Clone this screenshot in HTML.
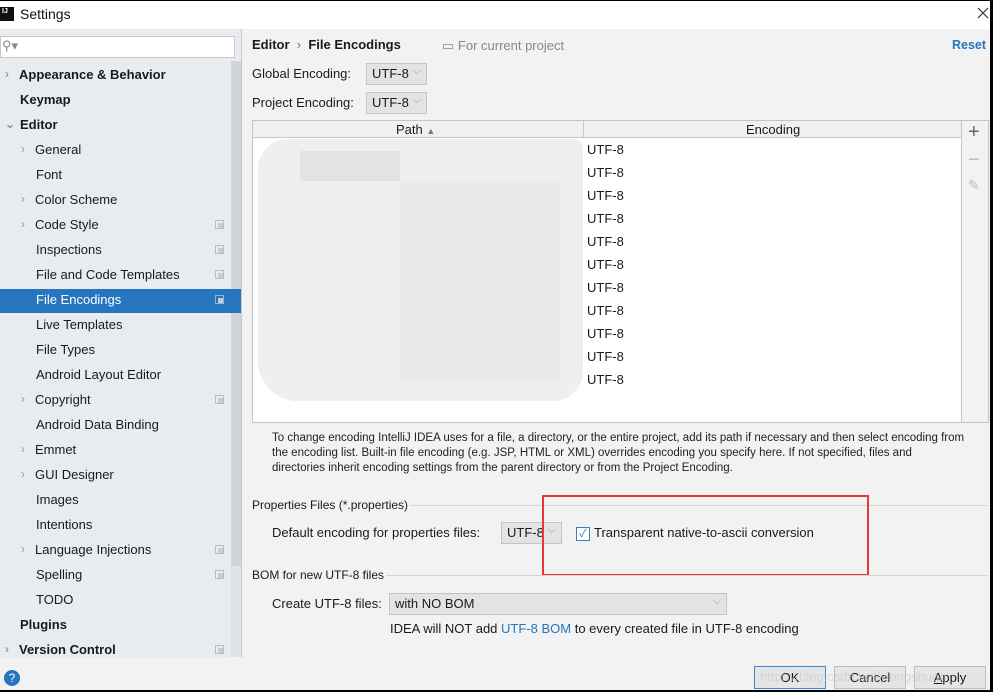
<!DOCTYPE html>
<html><head><meta charset="utf-8"><style>
*{margin:0;padding:0;box-sizing:border-box}
body{width:993px;height:692px;overflow:hidden;background:#000;font-family:"Liberation Sans","Noto Sans CJK SC",sans-serif;font-size:13px;color:#1a1a1a;position:relative}
.a{position:absolute;white-space:nowrap}
#win{position:absolute;left:0;top:1px;width:990px;height:689px;background:#f2f2f2}
.si{position:absolute;left:0;width:241px;height:25px;line-height:25px}
.b{font-weight:bold}
.arr{position:absolute;left:5px;color:#999;font-size:12px}
.cp{position:absolute;left:215px;top:8px;width:9px;height:9px;border:1px solid #b8bcc0}
.cp:after{content:"";position:absolute;left:2px;top:2px;width:5px;height:5px;background:#c8ccd0}
.cb{position:absolute;background:#e3e3e3;border:1px solid #c4c4c4;height:22px;line-height:20px;padding-left:5px}
.cb:after{content:"⌵";position:absolute;right:5px;top:-3px;color:#999;font-size:11px}
.row{position:absolute;left:587px;font-size:13px}
</style></head><body>
<div id="win">
<div class="a" style="left:0;top:0;width:990px;height:28px;background:#fff"></div>
<div class="a" style="left:0;top:6px;width:14px;height:14px;background:#111;color:#fff;font-size:7px;font-weight:bold;line-height:9px;padding-left:2px">IJ</div>
<div class="a" style="left:20px;top:5px;font-size:14px;color:#111">Settings</div>
<svg class="a" style="left:977px;top:6px" width="12" height="12"><path d="M1 1L11 11M11 1L1 11" stroke="#333" stroke-width="1.2"/></svg>
<div class="a" style="left:0;top:28px;width:241px;height:628px;background:#e8ebef"></div>
<div class="a" style="left:231px;top:60px;width:10px;height:596px;background:#dfe2e6"></div>
<div class="a" style="left:231px;top:60px;width:10px;height:505px;background:#d0d3d7"></div>
<div class="a" style="left:0;top:35px;width:235px;height:22px;background:#fff;border:1px solid #c8c8c8"></div>
<div class="a" style="left:2px;top:37px;color:#888;font-size:13px">⚲▾</div>
<div class="a" style="left:0;top:288px;width:241px;height:24px;background:#2675bf"></div>
<div id="side" class="a" style="left:0;top:61px;width:241px">
<div class="si b" style="top:0"><span class="arr">›</span><span style="margin-left:19px">Appearance &amp; Behavior</span></div>
<div class="si b" style="top:25px"><span style="margin-left:20px">Keymap</span></div>
<div class="si b" style="top:50px"><span class="arr">⌄</span><span style="margin-left:20px">Editor</span></div>
<div class="si" style="top:75px"><span class="arr" style="left:21px">›</span><span style="margin-left:35px">General</span></div>
<div class="si" style="top:100px"><span style="margin-left:36px">Font</span></div>
<div class="si" style="top:125px"><span class="arr" style="left:21px">›</span><span style="margin-left:35px">Color Scheme</span></div>
<div class="si" style="top:150px"><span class="arr" style="left:21px">›</span><span style="margin-left:35px">Code Style</span><i class="cp"></i></div>
<div class="si" style="top:175px"><span style="margin-left:36px">Inspections</span><i class="cp"></i></div>
<div class="si" style="top:200px"><span style="margin-left:36px">File and Code Templates</span><i class="cp"></i></div>
<div class="si" style="top:225px;color:#fff"><span style="margin-left:36px">File Encodings</span><i class="cp" style="border-color:#8fb5dd"></i></div>
<div class="si" style="top:250px"><span style="margin-left:36px">Live Templates</span></div>
<div class="si" style="top:275px"><span style="margin-left:36px">File Types</span></div>
<div class="si" style="top:300px"><span style="margin-left:36px">Android Layout Editor</span></div>
<div class="si" style="top:325px"><span class="arr" style="left:21px">›</span><span style="margin-left:35px">Copyright</span><i class="cp"></i></div>
<div class="si" style="top:350px"><span style="margin-left:36px">Android Data Binding</span></div>
<div class="si" style="top:375px"><span class="arr" style="left:21px">›</span><span style="margin-left:35px">Emmet</span></div>
<div class="si" style="top:400px"><span class="arr" style="left:21px">›</span><span style="margin-left:35px">GUI Designer</span></div>
<div class="si" style="top:425px"><span style="margin-left:36px">Images</span></div>
<div class="si" style="top:450px"><span style="margin-left:36px">Intentions</span></div>
<div class="si" style="top:475px"><span class="arr" style="left:21px">›</span><span style="margin-left:35px">Language Injections</span><i class="cp"></i></div>
<div class="si" style="top:500px"><span style="margin-left:36px">Spelling</span><i class="cp"></i></div>
<div class="si" style="top:525px"><span style="margin-left:36px">TODO</span></div>
<div class="si b" style="top:550px"><span style="margin-left:20px">Plugins</span></div>
<div class="si b" style="top:575px"><span class="arr">›</span><span style="margin-left:19px">Version Control</span><i class="cp"></i></div>
</div>
<div class="a" style="left:241px;top:28px;width:1px;height:628px;background:#c9c9c9"></div>
<div class="a" style="left:4px;top:669px;width:16px;height:16px;border-radius:50%;background:#2675bf;color:#fff;font-size:12px;text-align:center;line-height:16px">?</div>
<div class="a b" style="left:252px;top:36px;font-size:13px">Editor &nbsp;<span style="font-weight:normal;color:#777">›</span>&nbsp; File Encodings</div>
<div class="a" style="left:442px;top:37px;color:#888">▭ For current project</div>
<div class="a b" style="left:952px;top:37px;color:#2675bf;font-size:12.5px">Reset</div>
<div class="a" style="left:252px;top:65px">Global Encoding:</div>
<div class="cb a" style="left:366px;top:62px;width:61px">UTF-8</div>
<div class="a" style="left:252px;top:94px">Project Encoding:</div>
<div class="cb a" style="left:366px;top:91px;width:61px">UTF-8</div>
<div class="a" style="left:252px;top:119px;width:710px;height:303px;background:#fff;border:1px solid #c4c4c4"></div>
<div class="a" style="left:253px;top:120px;width:708px;height:17px;background:#f0f0f0;border-bottom:1px solid #c8c8c8"></div>
<div class="a" style="left:583px;top:120px;width:1px;height:17px;background:#c8c8c8"></div>
<div class="a" style="left:396px;top:121px;font-size:13px">Path <span style="font-size:9px;color:#777">▲</span></div>
<div class="a" style="left:746px;top:121px">Encoding</div>
<div class="a" style="left:258px;top:138px;width:325px;height:262px;background:#eeeff0;border-radius:30px 10px 30px 40px"></div>
<div class="a" style="left:300px;top:150px;width:100px;height:30px;background:#e3e3e3"></div>
<div class="a" style="left:400px;top:180px;width:160px;height:200px;background:#e9e9e9"></div>
<div class="row" style="top:141px">UTF-8</div>
<div class="row" style="top:164px">UTF-8</div>
<div class="row" style="top:187px">UTF-8</div>
<div class="row" style="top:210px">UTF-8</div>
<div class="row" style="top:233px">UTF-8</div>
<div class="row" style="top:256px">UTF-8</div>
<div class="row" style="top:279px">UTF-8</div>
<div class="row" style="top:302px">UTF-8</div>
<div class="row" style="top:325px">UTF-8</div>
<div class="row" style="top:348px">UTF-8</div>
<div class="row" style="top:371px">UTF-8</div>
<div class="a" style="left:962px;top:119px;width:27px;height:303px;border:1px solid #c4c4c4;border-left:none"></div>
<div class="a" style="left:968px;top:120px;font-size:20px;color:#666">+</div>
<div class="a" style="left:968px;top:148px;font-size:20px;color:#bbb">−</div>
<div class="a" style="left:968px;top:176px;font-size:14px;color:#bbb">✎</div>
<div class="a" style="left:272px;top:430px;font-size:11.5px;line-height:15px;color:#222">To change encoding IntelliJ IDEA uses for a file, a directory, or the entire project, add its path if necessary and then select encoding from<br>the encoding list. Built-in file encoding (e.g. JSP, HTML or XML) overrides encoding you specify here. If not specified, files and<br>directories inherit encoding settings from the parent directory or from the Project Encoding.</div>
<div class="a" style="left:252px;top:497px;font-size:12px">Properties Files (*.properties)</div>
<div class="a" style="left:410px;top:504px;width:578px;height:1px;background:#d5d5d5"></div>
<div class="a" style="left:272px;top:524px">Default encoding for properties files:</div>
<div class="cb a" style="left:501px;top:521px;width:61px">UTF-8</div>
<div class="a" style="left:576px;top:526px;width:14px;height:14px;background:#fff;border:1px solid #3a7cc4;color:#3a7cc4;font-size:11px;line-height:12px;text-align:center">✓</div>
<div class="a" style="left:594px;top:524px">Transparent native-to-ascii conversion</div>
<div class="a" style="left:542px;top:494px;width:327px;height:81px;border:2px solid #e53935"></div>
<div class="a" style="left:252px;top:567px;font-size:12px">BOM for new UTF-8 files</div>
<div class="a" style="left:386px;top:574px;width:602px;height:1px;background:#d5d5d5"></div>
<div class="a" style="left:272px;top:595px">Create UTF-8 files:</div>
<div class="cb a" style="left:389px;top:592px;width:338px">with NO BOM</div>
<div class="a" style="left:390px;top:620px">IDEA will NOT add <span style="color:#2675bf">UTF-8 BOM</span> to every created file in UTF-8 encoding</div>
<div class="a" style="left:754px;top:665px;width:72px;height:23px;background:#e5e5e5;border:1px solid #3a8ad6;text-align:center;line-height:21px">OK</div>
<div class="a" style="left:834px;top:665px;width:72px;height:23px;background:#e5e5e5;border:1px solid #bdbdbd;text-align:center;line-height:21px">Cancel</div>
<div class="a" style="left:914px;top:665px;width:72px;height:23px;background:#e5e5e5;border:1px solid #bdbdbd;text-align:center;line-height:21px"><u>A</u>pply</div>
<div class="a" style="left:760px;top:668px;color:rgba(200,200,200,.6);font-size:13px">https://blog.csdn.net/ylongshuan</div>
</div>
</body></html>
